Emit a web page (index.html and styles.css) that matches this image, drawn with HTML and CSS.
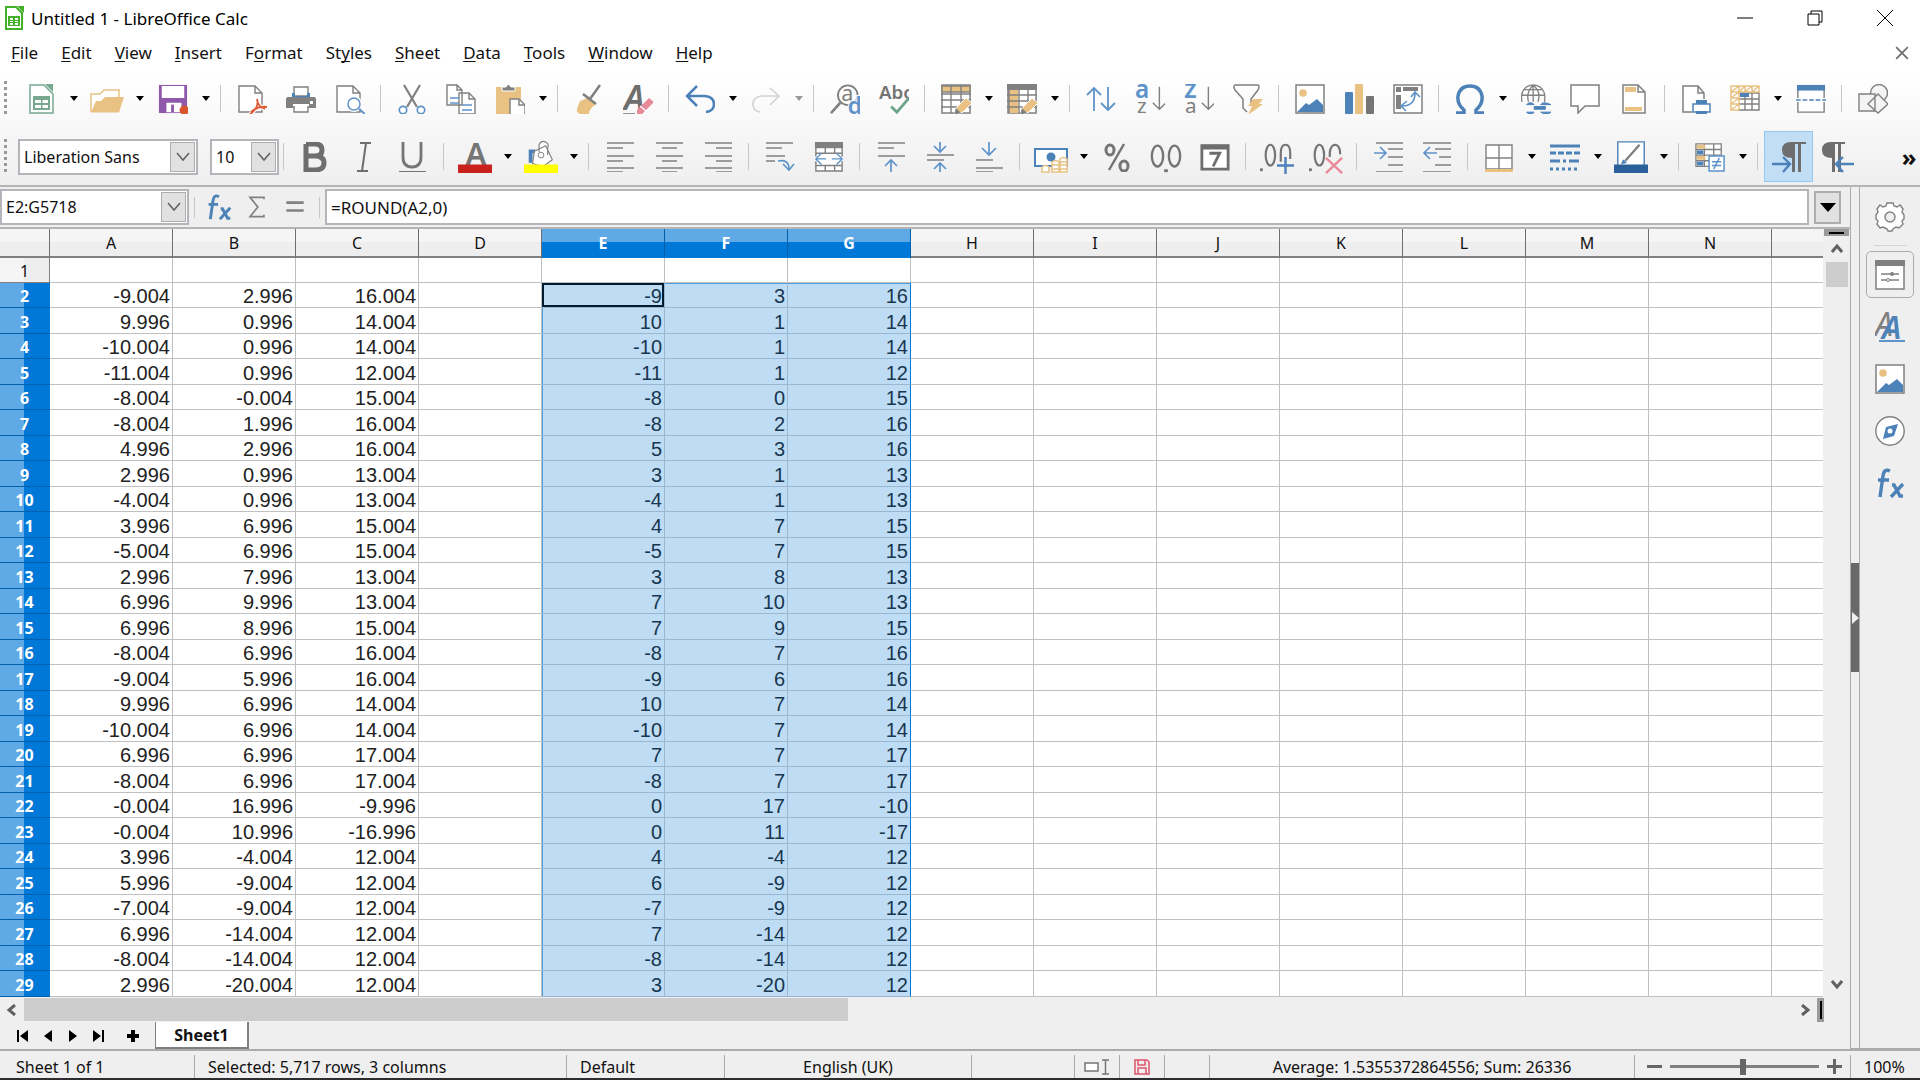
FILE: index.html
```html
<!DOCTYPE html>
<html lang="en">
<head>
  <meta charset="UTF-8">
  <meta name="viewport" content="width=device-width, initial-scale=1.0">
  <title>Untitled 1 - LibreOffice Calc</title>
  <link rel="stylesheet" href="styles.css">
</head>
<body>
  <!-- icon sprite -->
  <svg class="sprite" aria-hidden="true">
    <symbol id="app" viewBox="0 0 20 24"><path d="M2 1h10l6 6v16H2z" fill="#fff" stroke="#43b02a" stroke-width="2"/><path d="M13 0h7v7z" fill="#43b02a"/><path d="M4 10h12v10H4z" fill="#43b02a"/><path d="M6 12h3v2H6zM11 12h3v2h-3zM6 15h3v1H6zM11 15h3v1h-3zM6 17h3v2H6zM11 17h3v2h-3z" fill="#fff"/></symbol>
    <symbol id="new" viewBox="0 0 30 30"><path d="M4 1h14l9 9v19H4z" fill="#fff" stroke="#78a890" stroke-width="1.5"/><path d="M19 0h8v8z" fill="#78a890"/><path d="M7 12h17v14H7z" fill="#78a890"/><path d="M9 16h6v3H9zM16.500 16h5.500v3h-5.500zM9 21h6v3H9zM16.500 21h5.500v3h-5.500z" fill="#fff"/></symbol>
    <symbol id="open" viewBox="0 0 34 30"><path d="M1 28V10h9l4-4h15v9" fill="#fff" stroke="#e9c283" stroke-width="1.5"/><path d="M1 28.500 6 17h5l4-4h19l-5 15.500z" fill="#e9c283"/></symbol>
    <symbol id="save" viewBox="0 0 32 32"><path d="M1 1h30v30H1z" fill="#8e59ab"/><path d="M4 2h24v13H4zM9 20h16v10H9z" fill="#fff"/><path d="M14 22h3v8h-3z" fill="#8e59ab"/><circle cx="28" cy="28" r="5" fill="#d8552f"/></symbol>
    <symbol id="pdf" viewBox="0 0 30 30"><path d="M2 2h16l7 7v19H2zM18 2v7h7" fill="#fff" stroke="#808080" stroke-width="1.4"/><path d="M20 15c2 6-2 12-7 15M14 28c4-4 9-6 16-5M20 15c0 5 4 9 8 10" fill="none" stroke="#fff" stroke-width="4"/><path d="M20 15c2 6-2 12-7 15M14 28c4-4 9-6 16-5M20 15c0 5 4 9 8 10" fill="none" stroke="#de5b35" stroke-width="1.8"/></symbol>
    <symbol id="print" viewBox="0 0 30 30"><path d="M8 3h14v9H8z" fill="#fff" stroke="#808080" stroke-width="1.4"/><path d="M6 9h3v3h12V9h3v5H6z" fill="#4d82b8"/><path d="M0 15q0-2 2-2h26q2 0 2 2v9H0z" fill="#808080"/><path d="M24 17h3v3h-3zM7 20h16v3H7z" fill="#fff"/><path d="M8 22v6h14v-6" fill="#fff" stroke="#808080" stroke-width="1.4"/></symbol>
    <symbol id="preview" viewBox="0 0 30 30"><path d="M2 2h16l7 7v19H2zM18 2v7h7" fill="#fff" stroke="#808080" stroke-width="1.4"/><circle cx="19" cy="20" r="8" fill="#fff"/><circle cx="19" cy="20" r="6" fill="#fff" stroke="#5e93ca" stroke-width="1.5"/><path d="m24 25 6 5" stroke="#5e93ca" stroke-width="2"/></symbol>
    <symbol id="cut" viewBox="0 0 30 30"><path d="M7 1 20 23M23 1 10 23" stroke="#808080" stroke-width="2.200" fill="none"/><g fill="#fff" stroke="#5e93ca" stroke-width="1.700"><circle cx="6" cy="26" r="3.700"/><circle cx="24" cy="26" r="3.700"/></g></symbol>
    <symbol id="copy" viewBox="0 0 30 30"><path d="M1 1h10l5 5v15H1zM11 1v5h5M13 9h10l6 6v15H13zM23 9v6h6" fill="#fff" stroke="#808080" stroke-width="1.400"/><path d="M4 14h9M4 19h9M16 21h10M16 26h10" stroke="#5e93ca" stroke-width="1.400"/></symbol>
    <symbol id="paste" viewBox="0 0 30 30"><path d="M1 3h25v27H1z" fill="#e9c283"/><path d="M7 3h4q2-5 5 0h4v4H7z" fill="#808080" stroke="#fff"/><path d="M15 15h9l6 6v10H15z" fill="#fff" stroke="#808080" stroke-width="1.400"/><path d="M24 15v6h6" fill="none" stroke="#808080" stroke-width="1.400"/></symbol>
    <symbol id="brush" viewBox="0 0 30 30"><path d="M6 17q6-2 9-5l6 9q-6 4-6 9H6q-4-2-3-5z" fill="#e9c283"/><path d="m9 10 13 10M16 15 26 1" stroke="#808080" stroke-width="2.500"/></symbol>
    <symbol id="clear" viewBox="0 0 30 30"><path d="M0 30h12" stroke="#6e6e6e" stroke-width="1.400"/><text x="1" y="26" font-size="34" font-weight="600" font-style="italic" fill="#6e6e6e">A</text><path d="m14 26 12-12 5 4-12 12-5 2z" fill="#e8899a"/><path d="m17 22 6 5" stroke="#fff" stroke-width="1.300"/></symbol>
    <symbol id="undo" viewBox="0 0 30 30"><path d="M12 2 2 12l10 10M2 12h18q9 1 9 8t-8 8" fill="none" stroke="#4d82b8" stroke-width="2.500"/></symbol>
    <symbol id="redo" viewBox="0 0 30 30"><path d="m19 4 9 8-9 9M28 12H11q-9 1-9 8t7 8" fill="none" stroke="#d2d2d2" stroke-width="1.600"/></symbol>
    <symbol id="find" viewBox="0 0 32 32"><circle cx="19" cy="12" r="10.500" fill="none" stroke="#808080" stroke-width="2"/><path d="m11 20-10 11" stroke="#808080" stroke-width="2.800"/><text x="12" y="18" font-size="23" fill="#808080">a</text><text x="19" y="32" font-size="24" font-weight="600" fill="#5e93ca" stroke="#fbfbfb" stroke-width="2" paint-order="stroke">d</text></symbol>
    <symbol id="spell" viewBox="0 0 32 32"><text x="0" y="16" font-size="20" font-weight="600" fill="#757575">Abc</text><path d="m13 24 6 6 13-15" fill="none" stroke="#6ba48b" stroke-width="3"/></symbol>
    <symbol id="rows" viewBox="0 0 30 30"><path d="M1 1h28v28H1z" fill="#fff" stroke="#808080" stroke-width="1.500"/><path d="M1 2h28v6H1z" fill="#e9c283" stroke="#808080" stroke-width="1.400"/><path d="M0 10h30M0 16h30M0 23h30M10 1v28M20 1v28" stroke="#808080" stroke-width="1.400"/><path d="m13 31 3-8 9-9 6 5-9 9z" fill="#e9c283" stroke="#fff"/><path d="m13 31 2-7 5 5z" fill="#808080"/></symbol>
    <symbol id="cols" viewBox="0 0 30 30"><path d="M1 1h28v28H1z" fill="#fff" stroke="#808080" stroke-width="1.500"/><path d="M2 1h9v28H2z" fill="#e9c283"/><path d="M0 0h30v6H0z" fill="#808080"/><path d="M0 11h30M0 17h30M0 23h30M2 1v28M12 1v28M21 1v28" stroke="#808080" stroke-width="1.400"/><path d="m13 31 3-8 9-9 6 5-9 9z" fill="#e9c283" stroke="#fff"/><path d="m13 31 2-7 5 5z" fill="#808080"/></symbol>
    <symbol id="sort" viewBox="0 0 30 30"><path d="M8 27V4M1 11l7-7 7 7M22 3v23M15 19l7 7 7-7" fill="none" stroke="#5e93ca" stroke-width="1.800"/></symbol>
    <symbol id="az" viewBox="0 0 32 32"><text x="0" y="15" font-size="26" font-weight="600" fill="#5e93ca">a</text><text x="2" y="31" font-size="22" fill="#808080">z</text><path d="M26 3v24M19 20l7 7 7-7" fill="none" stroke="#808080" stroke-width="1.500"/></symbol>
    <symbol id="za" viewBox="0 0 32 32"><text x="0" y="15" font-size="28" font-weight="600" fill="#5e93ca">z</text><text x="1" y="31" font-size="22" fill="#808080">a</text><path d="M26 3v24M19 20l7 7 7-7" fill="none" stroke="#808080" stroke-width="1.500"/></symbol>
    <symbol id="filter" viewBox="0 0 30 30"><path d="M2 1h23q2 1 0 5l-7 9v4M2 1q-2 1 0 5l8 9v9l4 4" fill="none" stroke="#808080" stroke-width="1.500"/><path d="m20 15h10l-4 5h4L15 31l4-9h-4z" fill="#e9c283"/></symbol>
    <symbol id="image" viewBox="0 0 30 30"><path d="M1 1h28v28H1z" fill="#fff" stroke="#808080" stroke-width="1.500"/><circle cx="8" cy="9" r="3.800" fill="#e9c283"/><path d="M2 28 11 19l3 2 8-6 6 6v7z" fill="#4d82b8"/></symbol>
    <symbol id="chart" viewBox="0 0 30 30"><rect x="1" y="8" width="8" height="22" rx="1" fill="#4d82b8"/><rect x="11" y="0" width="8" height="30" rx="1" fill="#e9c283"/><rect x="22" y="12" width="8" height="18" rx="1" fill="#757575"/></symbol>
    <symbol id="pivot" viewBox="0 0 30 30"><path d="M1 1h28v28H1z" fill="#fff" stroke="#808080" stroke-width="1.500"/><path d="M3 3h5v5H3zM10 3h15v4H10zM3 11h5v14H3z" fill="#808080"/><path d="M9 22q13 0 13-13M18 13l4-5 5 5M14 17l-6 5 5 5" fill="none" stroke="#5e93ca" stroke-width="1.600"/></symbol>
    <symbol id="omega" viewBox="0 0 30 30"><path d="M1 29h8v-3Q2 20 3 12 5 2 15 2t12 10q1 8-6 14v3h8" fill="none" stroke="#4d82b8" stroke-width="3.500"/></symbol>
    <symbol id="globe" viewBox="0 0 32 32"><g fill="none" stroke="#808080" stroke-width="1.400"><path d="M1 19Q-1 8 6 3q7-4 14 0 7 5 5 16M13 1v18M1 12h25M3 6h20M8 19Q5 9 13 1q9 8 5 18"/></g><path d="M6 22q1-2 4-2t4 2zM21 22q1-2 4-2t7 2zM14 24h12v3H14zM6 30h8q-1 2-4 2t-4-2zM21 30h11q-2 2-5 2t-6-2z" fill="#4d82b8" stroke="#4d82b8"/></symbol>
    <symbol id="comment" viewBox="0 0 30 30"><path d="M1 1h28v21H15l-7 7v-7H1z" fill="#fff" stroke="#808080" stroke-width="1.500"/></symbol>
    <symbol id="header" viewBox="0 0 30 30"><path d="M4 1h15l7 7v21H4zM19 1v7h7" fill="#fff" stroke="#808080" stroke-width="1.500"/><path d="M6 3h11v5H6zM6 23h17v4H6z" fill="#e9c283"/></symbol>
    <symbol id="area" viewBox="0 0 30 30"><path d="M2 2h15l6 7v19H2zM17 2v7h6" fill="#fff" stroke="#808080" stroke-width="1.500"/><path d="M11 15h19v16H11z" fill="#fafafa"/><path d="M12 20h17v8H12z" fill="#fff" stroke="#4d82b8" stroke-width="1.500"/><path d="M15 16h11v4H15zM15 27h11v4H15z" fill="#4d82b8"/></symbol>
    <symbol id="freeze" viewBox="0 0 30 30"><path d="M8 9h21v17H8M8 15h21M8 20h21M15 9v17M22 9v17" fill="#fff" stroke="#808080" stroke-width="1.400"/><path d="M1 2h28v6H9v18H1zM1 8h8V2M1 14h8M1 20h8M15 2v6M22 2v6M1 8l8-6M1 14l8-6M1 20l8-6M1 26l8-6M9 8l6-6M15 8l7-6M22 8l7-6" fill="#fff" stroke="#e9c283" stroke-width="1.500"/><path d="M10 9h9v4h-9z" fill="#4d82b8"/></symbol>
    <symbol id="split" viewBox="0 0 32 30"><path d="M2 2h28v27H2z" fill="#fff" stroke="#808080" stroke-width="1.500"/><path d="M1 0h30v6H1z" fill="#4d82b8"/><path d="M0 16h32" stroke="#fff" stroke-width="4"/><path d="M0 16h32" stroke="#4d82b8" stroke-width="1.500" stroke-dasharray="5 2"/></symbol>
    <symbol id="shapes" viewBox="0 0 30 30"><g fill="#f4f4f4" stroke="#808080" stroke-width="1.400"><circle cx="21" cy="9" r="8.500"/><path d="M1 10h16v17H1zM20 10l10 10-10 9-10-9z"/></g></symbol>
    <symbol id="bold" viewBox="0 0 30 30"><path d="M6 2h9q7 0 7 6t-7 6H6M15 14q9 0 9 7t-9 7H6V2" fill="none" stroke="#6e6e6e" stroke-width="5"/></symbol>
    <symbol id="italic" viewBox="0 0 30 30"><path d="M11 1h11M8 29h11M17 1l-4 28" stroke="#6e6e6e" stroke-width="2"/></symbol>
    <symbol id="underline" viewBox="0 0 30 30"><path d="M5 0v15q0 10 9 10t9-10V0" fill="none" stroke="#757575" stroke-width="2.800"/><path d="M1 30h27" stroke="#757575" stroke-width="2"/></symbol>
    <symbol id="fontcolor" viewBox="0 0 36 34"><text x="8" y="25" font-size="33" font-weight="600" fill="#757575">A</text><path d="M0 25h36v9H0z" fill="#c9211e"/></symbol>
    <symbol id="fill" viewBox="0 0 36 34"><path d="M5 23V9h7v4H9v10z" fill="#4d82b8"/><path d="m11 11 12-6 7 15-10 7-11-3zM16 12V4q2-5 7-3 4 2 2 7v7" fill="#fff" stroke="#808080" stroke-width="1.200"/><circle cx="18" cy="15" r="3" fill="#fff" stroke="#808080"/><path d="M0 25h36v9H0z" fill="#ff0"/></symbol>
    <symbol id="left" viewBox="0 0 30 30"><path d="M2 1h27M2 6h16M2 14h27M2 19h16M2 26h27M2 30h16" stroke="#808080" stroke-width="1.500"/></symbol>
    <symbol id="center" viewBox="0 0 30 30"><path d="M2 1h27M8 6h15M2 14h27M8 19h15M2 26h27M8 30h15" stroke="#808080" stroke-width="1.500"/></symbol>
    <symbol id="right" viewBox="0 0 30 30"><path d="M2 1h27M13 6h16M2 14h27M13 19h16M2 26h27M13 30h16" stroke="#808080" stroke-width="1.500"/></symbol>
    <symbol id="wrap" viewBox="0 0 30 30"><path d="M1 1h27M1 6h16M1 14h19M1 19h9M1 31h28" stroke="#808080" stroke-width="1.500"/><path d="M13 19q11-2 11 8M18 22l6 6 5-6" fill="none" stroke="#5e93ca" stroke-width="1.600"/></symbol>
    <symbol id="merge" viewBox="0 0 30 32"><path d="M0 0h30v6H0z" fill="#808080"/><path d="M1 6h28v25H1zM1 12h28M1 25h28M11 6v6M21 6v6M11 25v6M21 25v6" fill="#fff" stroke="#808080" stroke-width="1.500"/><path d="M0 18h30" stroke="#fff" stroke-width="5"/><path d="M1 18h11M7 12l-6 6 6 6M18 18h11M23 12l6 6-6 6" fill="none" stroke="#5e93ca" stroke-width="1.500"/></symbol>
    <symbol id="top" viewBox="0 0 30 30"><path d="M2 1h27M2 6h16M2 14h27" stroke="#808080" stroke-width="1.500"/><path d="M15 30V18M9 24l6-6 6 6" fill="none" stroke="#5e93ca" stroke-width="1.700"/></symbol>
    <symbol id="middle" viewBox="0 0 30 30"><path d="M2 13h27M2 18h17" stroke="#808080" stroke-width="1.500"/><path d="M15 0v10M9 4l6 6 6-6M15 31V21M9 27l6-6 6 6" fill="none" stroke="#5e93ca" stroke-width="1.700"/></symbol>
    <symbol id="bottom" viewBox="0 0 30 30"><path d="M2 18h17M2 26h27M2 30h17" stroke="#808080" stroke-width="1.500"/><path d="M15 0v12M8 6l7 7 7-7" fill="none" stroke="#5e93ca" stroke-width="1.700"/></symbol>
    <symbol id="currency" viewBox="0 0 34 30"><path d="M1 7h32v17H1z" fill="#fff" stroke="#4d82b8" stroke-width="2"/><circle cx="17" cy="15" r="4.500" fill="#4d82b8"/><path d="M8 25q3-3 7 0v5H8zM18 20q4-3 7 0v10h-7zM26 17q3-3 7 0v13h-7zM18 23h15M18 27h15M26 20h7" fill="#fff" stroke="#e9c283" stroke-width="1.500"/></symbol>
    <symbol id="percent" viewBox="0 0 30 30"><g fill="none" stroke="#757575" stroke-width="3"><ellipse cx="8" cy="8" rx="4" ry="5"/><ellipse cx="22" cy="24" rx="4" ry="5"/><path d="M22 2 7 28" stroke-width="2.500"/></g></symbol>
    <symbol id="number" viewBox="0 0 36 32"><g fill="none" stroke="#757575" stroke-width="2.500"><ellipse cx="9" cy="15" rx="6" ry="11"/><ellipse cx="27" cy="15" rx="6" ry="11"/></g><path d="M16 29h4v3h-4z" fill="#757575"/></symbol>
    <symbol id="date" viewBox="0 0 32 30"><path d="M2 3h28v25H2z" fill="#fff" stroke="#6e6e6e" stroke-width="3"/><path d="M1 2h30v5H1z" fill="#6e6e6e"/><path d="M10 11h11l-7 14" fill="none" stroke="#6e6e6e" stroke-width="3"/></symbol>
    <symbol id="adddec" viewBox="0 0 36 34"><g fill="none" stroke="#757575" stroke-width="2.300"><ellipse cx="11" cy="15" rx="5" ry="11"/><path d="M22 22V13q0-9 5-9t5 9v6"/></g><path d="M0 29h3v3H0z" fill="#757575"/><path d="M18 26h18M27 17v18" stroke="#4d82b8" stroke-width="2.600"/></symbol>
    <symbol id="deldec" viewBox="0 0 36 34"><g fill="none" stroke="#757575" stroke-width="2.300"><ellipse cx="11" cy="15" rx="5" ry="11"/><path d="M22 17v-5q1-8 6-8 5 1 5 10"/></g><path d="M0 29h3v3H0z" fill="#757575"/><path d="m18 18 17 16M35 18 18 34" stroke="#e8899a" stroke-width="2.600"/></symbol>
    <symbol id="indent" viewBox="0 0 30 30"><path d="M3 1h27M15 7h15M15 15h15M15 23h15M3 30h27" stroke="#808080" stroke-width="1.500"/><path d="M1 11h12M7 5l6 6-6 6" fill="none" stroke="#5e93ca" stroke-width="1.600"/></symbol>
    <symbol id="outdent" viewBox="0 0 30 30"><path d="M1 1h28M13 7h16M17 15h12M13 23h16M1 30h28" stroke="#808080" stroke-width="1.500"/><path d="M2 11h13M8 5l-6 6 6 6" fill="none" stroke="#5e93ca" stroke-width="1.600"/></symbol>
    <symbol id="borders" viewBox="0 0 30 30"><path d="M2 3h26v24H2zM15 3v24M2 16h26" fill="#fff" stroke="#808080" stroke-width="1.400"/><path d="M1 27h28v3H1z" fill="#e9c283"/></symbol>
    <symbol id="lines" viewBox="0 0 30 30"><g stroke="#4d82b8" stroke-width="3"><path d="M0 4h30"/><path d="M0 11h30" stroke-dasharray="6 2"/><path d="M0 19h30" stroke-dasharray="10 3 3 3"/><path d="M0 27h30" stroke-dasharray="3 3"/></g></symbol>
    <symbol id="bcolor" viewBox="0 0 36 34"><path d="M4 1h28v26H4z" fill="#fff" stroke="#4d82b8" stroke-width="1.500"/><path d="M27 4 12 21" stroke="#808080" stroke-width="2.500"/><path d="m8 24 2-4 3 3z" stroke="#4d82b8" fill="#4d82b8"/><path d="M0 25h36v9H0z" fill="#2a6099"/></symbol>
    <symbol id="cond" viewBox="0 0 32 32"><path d="M1 2h27v24H1zM1 8h27M1 14h27M1 20h27M10 2v24M20 2v24" fill="#fff" stroke="#808080" stroke-width="1.400"/><path d="M2 3h9v4H2zM2 15h9v4H2z" fill="#e9c283"/><path d="M2 9h7v4H2zM2 21h7v4H2z" fill="#4d82b8"/><path d="M15 15h16v16H15z" fill="#fff" stroke="#5e93ca" stroke-width="1.600"/><path d="M18 21h10M18 25h10M26 17l-6 12" stroke="#5e93ca" stroke-width="1.500"/></symbol>
    <symbol id="ltr" viewBox="0 0 34 32"><path d="M34 1v2h-5v28h-3V3h-3v28h-3V17q-10 0-10-8 0-8 9-8z" fill="#6e6e6e"/><path d="M0 23h18M11 16l7 7-7 8" fill="none" stroke="#4d82b8" stroke-width="2.400"/></symbol>
    <symbol id="rtl" viewBox="0 0 34 32"><path d="M24 1v2h-4v28h-3V3h-3v28h-3V17Q1 17 1 9q0-8 9-8z" fill="#6e6e6e"/><path d="M33 23H15M22 16l-7 7 7 8" fill="none" stroke="#4d82b8" stroke-width="2.400"/></symbol>
    <symbol id="fx" viewBox="0 0 30 30"><g fill="none" stroke="#4d82b8" stroke-width="3.400"><path d="M15 3q-6-3-7 5L5 29M3 12h11"/><path d="M17 17h2l6 11h3M28 16 16 29"/></g></symbol>
    <symbol id="sum" viewBox="0 0 30 30"><path d="M23 6V4H7l9 11L7 26h16v-2" fill="none" stroke="#808080" stroke-width="2"/></symbol>
    <symbol id="equals" viewBox="0 0 30 30"><path d="M5 10h20M5 19h20" stroke="#808080" stroke-width="3"/></symbol>
    <symbol id="gear" viewBox="0 0 30 30"><path d="M12 1h6l1 3 3 1 3-2 3 4-1 3 2 3v4l-2 2 1 3-4 4-3-1-3 2-1 2h-4l-1-2-4-2-3 1-3-4 1-3-2-2v-4l2-3-1-3 3-4 3 2 3-1z" fill="#fff" stroke="#808080" stroke-width="1.400"/><circle cx="15" cy="15" r="5" fill="#efefef" stroke="#808080" stroke-width="1.400"/></symbol>
    <symbol id="props" viewBox="0 0 30 30"><path d="M1 1h28v28H1z" fill="#fff" stroke="#808080" stroke-width="1.500"/><path d="M0 0h30v6H0z" fill="#808080"/><path d="M6 14h18M6 20h18" stroke="#808080" stroke-width="1.500"/><circle cx="17" cy="14" r="2" fill="#808080"/><circle cx="13" cy="20" r="1.500" fill="#fff" stroke="#5e7f94"/></symbol>
    <symbol id="styles" viewBox="0 0 30 30"><text x="0" y="24" font-size="32" font-style="italic" fill="#808080">A</text><text x="7" y="27" font-size="32" font-weight="600" font-style="italic" fill="#4d82b8">A</text><path d="M4 29h26" stroke="#5e93ca" stroke-width="2"/></symbol>
    <symbol id="compass" viewBox="0 0 30 30"><circle cx="15" cy="15" r="14.200" fill="#fff" stroke="#808080" stroke-width="1.400"/><path d="m23 8-4 12-11 3 3-12z" fill="#4d82b8"/><circle cx="15" cy="15" r="2.500" fill="#fff"/></symbol>
    <symbol id="chev" viewBox="0 0 14 10"><path d="m1 1 6 7 6-7" fill="none" stroke="#606060" stroke-width="1.500"/></symbol>
    <symbol id="scroll" viewBox="0 0 12 12"><path d="m1 3 5 6 5-6" fill="none" stroke="#606060" stroke-width="3"/></symbol>
    <symbol id="insmode" viewBox="0 0 26 16"><path d="M1 4h13v8H1z" fill="#fff" stroke="#757575" stroke-width="1.500"/><path d="M18 1h7M18 15h7M21.500 1v14" stroke="#757575" stroke-width="1.500"/></symbol>
    <symbol id="modified" viewBox="0 0 16 16"><path d="M1 1h12l2 2v12H1zM4 1v5h7V1M4 15V9h8v6" fill="none" stroke="#e0566c" stroke-width="1.500"/></symbol>
  </svg>

  <header class="top">
    <div class="titlebar">
      <svg class="app-icon"><use href="#app"/></svg>
      <h1>Untitled 1 - LibreOffice Calc</h1>
      <button aria-label="Minimize"><svg viewBox="0 0 16 16"><path d="M0 8h16"/></svg></button>
      <button aria-label="Restore"><svg viewBox="0 0 16 16"><path d="M1 4h11v11H1zM4 4V1h11v11h-3"/></svg></button>
      <button aria-label="Close"><svg viewBox="0 0 16 16"><path d="m0 0 16 16M16 0 0 16"/></svg></button>
    </div>
    <nav class="menubar">
      <a href="#"><u>F</u>ile</a>
      <a href="#"><u>E</u>dit</a>
      <a href="#"><u>V</u>iew</a>
      <a href="#"><u>I</u>nsert</a>
      <a href="#">F<u>o</u>rmat</a>
      <a href="#">St<u>y</u>les</a>
      <a href="#"><u>S</u>heet</a>
      <a href="#"><u>D</u>ata</a>
      <a href="#"><u>T</u>ools</a>
      <a href="#"><u>W</u>indow</a>
      <a href="#"><u>H</u>elp</a>
      <button class="doc-close" aria-label="Close document"><svg viewBox="0 0 12 12"><path d="m1 1 10 10M11 1 1 11"/></svg></button>
    </nav>
    <div class="toolbar" id="standardBar"></div>
    <div class="toolbar" id="formatBar">
      <label class="combo font-name">
        <select aria-label="Font name"><option>Liberation Sans</option></select>
        <span class="combo-arrow"><svg><use href="#chev"/></svg></span>
      </label>
      <label class="combo font-size">
        <select aria-label="Font size"><option>10</option></select>
        <span class="combo-arrow"><svg><use href="#chev"/></svg></span>
      </label>
    </div>
  </header>

  <main class="workspace">
    <div class="document">
      <div class="formula-bar">
        <label class="combo name-box">
          <input type="text" value="E2:G5718" aria-label="Name box">
          <span class="combo-arrow"><svg><use href="#chev"/></svg></span>
        </label>
        <span class="sep"></span>
        <button class="fn" aria-label="Function wizard"><svg><use href="#fx"/></svg></button>
        <button class="fn" aria-label="Select function"><svg><use href="#sum"/></svg></button>
        <button class="fn" aria-label="Formula"><svg><use href="#equals"/></svg></button>
        <span class="sep"></span>
        <input class="formula" type="text" value="=ROUND(A2,0)" aria-label="Input line">
        <button class="expand" aria-label="Expand formula bar"><i></i></button>
      </div>
      <div class="sheet">
        <div class="cells"><table id="grid"></table></div>
        <div class="vscroll">
          <span class="split-handle"></span>
          <button aria-label="Scroll up"><svg class="up"><use href="#scroll"/></svg></button>
          <span class="thumb"></span>
          <button class="end" aria-label="Scroll down"><svg><use href="#scroll"/></svg></button>
        </div>
      </div>
      <div class="hscroll">
        <button aria-label="Scroll left"><svg class="prev"><use href="#scroll"/></svg></button>
        <div class="track"><span class="thumb"></span></div>
        <button aria-label="Scroll right"><svg class="next"><use href="#scroll"/></svg></button>
        <span class="split-handle"></span>
      </div>
      <div class="tabs">
        <button aria-label="First sheet"><svg viewBox="0 0 14 14"><path d="M1 1h2v12H1zM12 1v12L4 7z"/></svg></button>
        <button aria-label="Previous sheet"><svg viewBox="0 0 14 14"><path d="M11 1v12L3 7z"/></svg></button>
        <button aria-label="Next sheet"><svg viewBox="0 0 14 14"><path d="M3 1v12l8-6z"/></svg></button>
        <button aria-label="Last sheet"><svg viewBox="0 0 14 14"><path d="M11 1h2v12h-2zM2 1v12l8-6z"/></svg></button>
        <button class="add" aria-label="Add sheet"><svg viewBox="0 0 14 14"><path d="M5 1h4v4h4v4H9v4H5V9H1V5h4z"/></svg></button>
        <button class="tab">Sheet1</button>
      </div>
    </div>
    <div class="splitter"><button aria-label="Hide sidebar"><i></i></button></div>
    <aside class="sidebar">
      <button aria-label="Sidebar settings"><svg><use href="#gear"/></svg></button>
      <hr>
      <button class="active" aria-label="Properties"><svg><use href="#props"/></svg></button>
      <button aria-label="Styles"><svg><use href="#styles"/></svg></button>
      <button aria-label="Gallery"><svg><use href="#image"/></svg></button>
      <button aria-label="Navigator"><svg><use href="#compass"/></svg></button>
      <button aria-label="Functions"><svg><use href="#fx"/></svg></button>
    </aside>
  </main>

  <footer class="statusbar">
    <span>Sheet 1 of 1</span>
    <span>Selected: 5,717 rows, 3 columns</span>
    <span>Default</span>
    <span class="mid">English (UK)</span>
    <span></span>
    <span class="mid"><svg class="ins"><use href="#insmode"/></svg></span>
    <span class="mid"><svg class="mod"><use href="#modified"/></svg></span>
    <span></span>
    <span class="mid">Average: 1.5355372864556; Sum: 26336</span>
    <span class="zoom">
      <button class="minus" aria-label="Zoom out"></button>
      <input type="range" min="0" max="100" value="49" aria-label="Zoom">
      <button class="plus" aria-label="Zoom in"></button>
    </span>
    <span>100%</span>
  </footer>

  <script>
    // toolbars: "|" is a separator, a trailing "+" adds a drop-down arrow
    const standard = 'new+ open+ save+ | pdf print preview | cut copy paste+ | brush clear | undo+ redo+ | find spell | rows+ cols+ | sort az za filter | image chart pivot | omega+ globe comment header | area freeze+ split | shapes';
    const format = '| bold italic underline | fontcolor+ fill+ | left center right | wrap merge | top middle bottom | currency+ percent number date | adddec deldec | indent outdent | borders+ lines+ bcolor+ | cond+ | ltr rtl';
    const wide = ['fontcolor', 'fill', 'number', 'adddec', 'deldec', 'bcolor', 'ltr', 'rtl', 'open', 'currency'];

    function buildBar(id, items) {
      let html = '';
      items.split(' ').forEach(item => {
        if (item === '|') {
          html += '<span class="sep"></span>';
          return;
        }
        const name = item.replace('+', '');
        let cls = 'tool';
        if (wide.includes(name)) cls += ' wide';
        if (name === 'ltr') cls += ' active';
        html += `<button class="${cls}" aria-label="${name}"><svg><use href="#${name}"/></svg></button>`;
        if (item.endsWith('+')) {
          html += `<button class="drop${name === 'redo' ? ' off' : ''}" aria-label="${name} options"><i></i></button>`;
        }
      });
      document.getElementById(id).insertAdjacentHTML('beforeend', html);
    }

    buildBar('standardBar', standard);
    buildBar('formatBar', format);
    document.getElementById('formatBar').insertAdjacentHTML('beforeend', '<button class="more" aria-label="More">»</button>');

    // columns A, B, C then E, F, G
    const rows = [
      ['-9.004', '2.996', '16.004', -9, 3, 16],
      ['9.996', '0.996', '14.004', 10, 1, 14],
      ['-10.004', '0.996', '14.004', -10, 1, 14],
      ['-11.004', '0.996', '12.004', -11, 1, 12],
      ['-8.004', '-0.004', '15.004', -8, 0, 15],
      ['-8.004', '1.996', '16.004', -8, 2, 16],
      ['4.996', '2.996', '16.004', 5, 3, 16],
      ['2.996', '0.996', '13.004', 3, 1, 13],
      ['-4.004', '0.996', '13.004', -4, 1, 13],
      ['3.996', '6.996', '15.004', 4, 7, 15],
      ['-5.004', '6.996', '15.004', -5, 7, 15],
      ['2.996', '7.996', '13.004', 3, 8, 13],
      ['6.996', '9.996', '13.004', 7, 10, 13],
      ['6.996', '8.996', '15.004', 7, 9, 15],
      ['-8.004', '6.996', '16.004', -8, 7, 16],
      ['-9.004', '5.996', '16.004', -9, 6, 16],
      ['9.996', '6.996', '14.004', 10, 7, 14],
      ['-10.004', '6.996', '14.004', -10, 7, 14],
      ['6.996', '6.996', '17.004', 7, 7, 17],
      ['-8.004', '6.996', '17.004', -8, 7, 17],
      ['-0.004', '16.996', '-9.996', 0, 17, -10],
      ['-0.004', '10.996', '-16.996', 0, 11, -17],
      ['3.996', '-4.004', '12.004', 4, -4, 12],
      ['5.996', '-9.004', '12.004', 6, -9, 12],
      ['-7.004', '-9.004', '12.004', -7, -9, 12],
      ['6.996', '-14.004', '12.004', 7, -14, 12],
      ['-8.004', '-14.004', '12.004', -8, -14, 12],
      ['2.996', '-20.004', '12.004', 3, -20, 12]
    ];

    const letters = 'ABCDEFGHIJKLMN'.split('');
    let head = '<thead><tr><th class="corner"></th>';
    letters.forEach(l => {
      head += `<th scope="col"${'EFG'.includes(l) ? ' class="sel"' : ''}>${l}</th>`;
    });
    head += '<th class="rest"></th></tr></thead>';

    let body = '<tbody><tr><th scope="row">1</th>' + '<td></td>'.repeat(15) + '</tr>';
    rows.forEach((r, i) => {
      const cells = [r[0], r[1], r[2], '', r[3], r[4], r[5], '', '', '', '', '', '', '', ''];
      body += `<tr><th scope="row" class="sel">${i + 2}</th>`;
      cells.forEach((value, c) => {
        let cls = c >= 4 && c <= 6 ? 'sel' : '';
        if (c === 4) cls += ' first';
        if (c === 6) cls += ' last';
        if (c === 4 && i === 0) cls += ' cursor';
        body += `<td${cls ? ` class="${cls}"` : ''}>${value}</td>`;
      });
      body += '</tr>';
    });
    document.getElementById('grid').innerHTML = head + body + '</tbody>';
  </script>
</body>
</html>
```
FILE: styles.css
```css
* {
  box-sizing: border-box;
}

body {
  margin: 0;
  min-height: 100vh;
  display: flex;
  flex-direction: column;
  background: #efefef;
  color: #111;
  font-family: "Noto Sans", "Open Sans", sans-serif;
  font-size: 16px;
}

button, input, select {
  font: inherit;
  color: inherit;
}

button {
  display: flex;
  align-items: center;
  justify-content: center;
  padding: 0;
  border: none;
  background: none;
}

.sprite {
  display: none;
}

/* title and menus */
.top {
  background: linear-gradient(to bottom, #fff 0, #fff 40%, #efefef 100%);
  border-bottom: 2px solid #b4b4b4;
}

.titlebar {
  display: flex;
  align-items: center;
  height: 36px;
  padding-left: 4px;
}

.app-icon {
  width: 20px;
  height: 24px;
}

h1 {
  flex: 1;
  margin: 0 0 0 7px;
  font-size: 17px;
  font-weight: 400;
  color: #000;
}

.titlebar button {
  width: 70px;
  height: 32px;
}

.titlebar button svg {
  width: 16px;
  height: 16px;
  fill: none;
  stroke: #000;
}

.menubar {
  display: flex;
  align-items: center;
  height: 33px;
  padding-left: 11px;
  gap: 23px;
  font-size: 17px;
}

.menubar a {
  color: #111;
  text-decoration: none;
}

.menubar u {
  text-decoration: underline 1px;
  text-decoration-skip-ink: none;
  text-underline-offset: 2px;
}

.doc-close {
  margin-left: auto;
  width: 36px;
}

.doc-close svg {
  width: 14px;
  height: 14px;
  stroke: #6e6e6e;
  stroke-width: 1.500;
}

/* toolbars */
.toolbar {
  display: flex;
  align-items: center;
  height: 58px;
  padding: 1px 0 0 16px;
  background: repeating-linear-gradient(to bottom, #999 0 3px, transparent 3px 6px) 4px 12px / 3px 33px no-repeat;
}

.tool {
  width: 49px;
  height: 51px;
  flex: none;
}

.tool svg {
  width: 30px;
  height: 30px;
  overflow: visible;
}

.tool.wide svg {
  width: 34px;
  height: 34px;
}

.tool.active {
  background: #c2def5;
  border: 1px solid #90c8f6;
}

.drop {
  width: 17px;
  height: 51px;
  flex: none;
}

.drop i {
  border: 4px solid transparent;
  border-top: 5px solid #000;
  border-bottom: 0;
}

.drop.off i {
  border-top-color: #999;
}

.sep {
  width: 1px;
  height: 27px;
  margin: 0 6px;
  background: #c6c6c6;
  flex: none;
}

.more {
  margin-left: auto;
  width: 22px;
  font-size: 24px;
  font-weight: 700;
}

.combo {
  position: relative;
  height: 36px;
  flex: none;
}

.combo select, .combo input {
  width: 100%;
  height: 100%;
  padding: 0 30px 0 4px;
  border: 2px solid #b4b4ba;
  border-radius: 0;
  background: #fff;
  appearance: none;
}

.combo-arrow {
  position: absolute;
  top: 3px;
  right: 3px;
  bottom: 3px;
  width: 25px;
  display: flex;
  align-items: center;
  justify-content: center;
  border: 1px solid #adadad;
  background: #e1e1e1;
  pointer-events: none;
}

.combo-arrow svg {
  width: 14px;
  height: 10px;
}

.font-name {
  width: 180px;
  margin-left: 2px;
}

.font-size {
  width: 69px;
  margin: 0 -2px 0 12px;
}

/* main area */
.workspace {
  display: flex;
}

.document {
  flex: 1;
  min-width: 0;
}

.formula-bar {
  display: flex;
  align-items: center;
  height: 42px;
  padding-right: 9px;
  border-bottom: 2px solid #b4b4b4;
}

.name-box {
  width: 189px;
}

.formula-bar .sep {
  height: 21px;
  margin: 0 5px;
}

.fn {
  width: 38px;
  height: 36px;
}

.fn svg {
  width: 26px;
  height: 26px;
}

.formula {
  flex: 1;
  min-width: 0;
  height: 36px;
  padding: 0 4px;
  border: 2px solid #b4b4ba;
  background: #fff;
  font-size: 17px;
}

.expand {
  width: 27px;
  height: 33px;
  margin-left: 5px;
  border: 2px solid #adadad;
  background: #e1e1e1;
}

.expand i {
  border: 8px solid transparent;
  border-top: 9px solid #000;
  border-bottom: 0;
}

.sheet {
  display: flex;
}

.cells {
  flex: 1;
  min-width: 0;
}

table {
  width: 100%;
  table-layout: fixed;
  border-collapse: separate;
  border-spacing: 0;
  background: #fff;
}

th, td {
  width: 123px;
  padding: 2px 0 0;
  overflow: hidden;
  line-height: 22px;
}

thead th {
  height: 29px;
  padding-top: 1px;
  font-weight: 400;
  background: linear-gradient(to bottom, #f5f5f5 50%, #eee 50%);
  border-right: 1px solid #6e6e6e;
  border-bottom: 2px solid #808080;
}

thead .corner, tbody th {
  width: 50px;
}

thead .rest {
  width: auto;
  border-right: none;
}

thead .sel {
  font-weight: 700;
  color: #fff;
  background: linear-gradient(to bottom, #5fa9e6 50%, #0078d7 50%);
  border-right-color: #0060ac;
  border-bottom-color: #0078d7;
}

tbody th {
  font-weight: 400;
  background: linear-gradient(to right, #f5f5f5 50%, #eee 50%);
  border-right: 1px solid #808080;
  border-bottom: 1px solid #808080;
}

tbody th.sel {
  font-weight: 700;
  color: #fff;
  background: linear-gradient(to right, #5fa9e6 50%, #0078d7 50%);
  border-right-color: #0078d7;
  border-bottom-color: #0060ac;
}

tbody tr {
  height: 25px;
}

tbody tr:nth-child(odd) {
  height: 26px;
}

tbody tr:first-child {
  height: 25px;
}

td {
  padding-right: 2px;
  text-align: right;
  font-family: "Liberation Sans", sans-serif;
  font-size: 20px;
  color: #222;
  border-right: 1px solid #c0c0c0;
  border-bottom: 1px solid #c0c0c0;
}

td:last-child {
  border-right: none;
}

td.sel {
  color: #17364f;
  background: #bfdcf5;
  border-color: #9ab7cf;
}

td.last {
  border-right-color: #0078d7;
}

td.first {
  box-shadow: inset 1px 0 #4d9fe2;
}

tr:nth-child(2) td.sel {
  box-shadow: inset 0 1px #4d9fe2;
}

tr:nth-child(2) td.cursor {
  box-shadow: inset 0 0 0 2px #001c33;
}

.vscroll {
  display: flex;
  flex-direction: column;
  align-items: center;
  width: 27px;
}

.vscroll .split-handle {
  width: 25px;
  height: 7px;
  border: solid #9a9a9a;
  border-width: 3px 5px 2px;
  background: #000;
}

.vscroll button {
  width: 24px;
  height: 26px;
}

.vscroll .thumb {
  width: 22px;
  height: 25px;
  background: #cdcdcd;
}

.vscroll .end {
  margin-top: auto;
}

.vscroll svg, .hscroll svg {
  width: 12px;
  height: 12px;
}

.up {
  transform: rotate(180deg);
}

.prev {
  transform: rotate(90deg);
}

.next {
  transform: rotate(-90deg);
}

.hscroll {
  display: flex;
  height: 25px;
  padding: 1px 26px 0 0;
}

.hscroll button {
  width: 24px;
}

.hscroll .track {
  flex: 1;
}

.hscroll .thumb {
  display: block;
  width: 46.6%;
  height: 23px;
  background: #cdcdcd;
}

.hscroll .split-handle {
  width: 7px;
  border: solid #9a9a9a;
  border-width: 3px 2px 3px 3px;
  background: #000;
}

.tabs {
  display: flex;
  height: 27px;
  padding-left: 10px;
}

.tabs button {
  width: 25px;
}

.tabs svg {
  width: 14px;
  height: 14px;
}

.tabs .add {
  width: 45px;
}

.tabs .tab {
  width: 94px;
  font-weight: 700;
  background: #fff;
  border: 2px solid #808080;
  border-width: 0 2px 2px 1px;
}

.splitter {
  display: flex;
  align-items: center;
  width: 10px;
  border: 1px solid #ababab;
  border-top: 0;
}

.splitter button {
  width: 10px;
  height: 109px;
  background: #696969;
}

.splitter i {
  border: 6px solid transparent;
  border-left: 7px solid #efefef;
  border-right: 0;
}

.sidebar {
  display: flex;
  flex-direction: column;
  align-items: center;
  gap: 5px;
  width: 60px;
  padding-top: 6px;
  border-bottom: 1px solid #ababab;
}

.sidebar button {
  width: 48px;
  height: 47px;
  flex: none;
}

.sidebar svg {
  width: 30px;
  height: 30px;
  overflow: visible;
}

.sidebar hr {
  width: 33px;
  margin: 0;
  border: 0;
  border-top: 1px solid #d5d5d5;
}

.sidebar .active {
  border: 1px solid #adadad;
  border-radius: 5px;
}

/* status bar */
.statusbar {
  display: grid;
  grid-template-columns: 195px 372px 158px 247px 103px 45px 45px 45px 1fr 216px 69px;
  flex: 1;
  min-height: 30px;
  padding-top: 4px;
  border-top: 2px solid #ababab;
  border-bottom: 2px solid #2d2d30;
}

.statusbar > span {
  display: flex;
  align-items: center;
  padding-left: 13px;
  border-right: 1px solid #ababab;
  line-height: 20px;
  white-space: nowrap;
}

.statusbar > span:first-child {
  padding-left: 16px;
}

.statusbar > span:last-child {
  border-right: none;
}

.statusbar > .mid {
  padding: 0;
  justify-content: center;
}

.ins {
  width: 26px;
  height: 16px;
}

.mod {
  width: 16px;
  height: 16px;
}

.statusbar > .zoom {
  gap: 8px;
  padding: 0 8px 0 12px;
}

.zoom input {
  flex: 1;
  min-width: 0;
  margin: 0;
  height: 16px;
  background: linear-gradient(#808080, #808080) center / 100% 3px no-repeat;
  appearance: none;
}

.zoom input::-webkit-slider-thumb {
  appearance: none;
  width: 6px;
  height: 16px;
  background: #666;
}

.minus, .plus {
  width: 15px;
  height: 15px;
  background: linear-gradient(#666, #666) center / 15px 3px no-repeat;
}

.plus {
  background: linear-gradient(#666, #666) center / 15px 3px no-repeat, linear-gradient(#666, #666) center / 3px 15px no-repeat;
}
```
